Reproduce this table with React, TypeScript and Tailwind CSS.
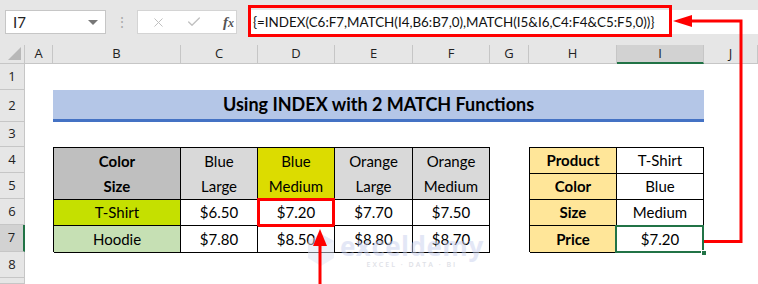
import { Check, X } from "lucide-react";

const COLS = ["A", "B", "C", "D", "E", "F", "G", "H", "I", "J"];
const ROWS = [1, 2, 3, 4, 5, 6, 7, 8, 9];

const CELL = "flex items-center justify-center border-r border-b border-black";

type Row = { product: string; bg: string; prices: string[] };

const ROWS_DATA: Row[] = [
  { product: "T-Shirt", bg: "bg-[#c5e000]", prices: ["$6.50", "$7.20", "$7.70", "$7.50"] },
  { product: "Hoodie", bg: "bg-[#c6e0b4]", prices: ["$7.80", "$8.50", "$8.80", "$8.70"] },
];

const HEADS = [
  { top: "Blue", bottom: "Large", bg: "bg-[#d9d9d9]" },
  { top: "Blue", bottom: "Medium", bg: "bg-[#dcdc00]" },
  { top: "Orange", bottom: "Large", bg: "bg-[#d9d9d9]" },
  { top: "Orange", bottom: "Medium", bg: "bg-[#d9d9d9]" },
];

const LOOKUP = [
  { label: "Product", value: "T-Shirt" },
  { label: "Color", value: "Blue" },
  { label: "Size", value: "Medium" },
  { label: "Price", value: "$7.20" },
];

function FormulaBar() {
  return (
    <div className="flex h-[45px] items-start pt-[10px] pl-[5px]">
      <div className="flex h-[24px] w-[101px] items-center justify-between border border-[#c6c6c6] bg-white pl-[7px] pr-[7px] text-[15px] text-[#222]">
        <span>I7</span>
        <span className="h-0 w-0 border-x-[5px] border-t-[5px] border-x-transparent border-t-[#777]" />
      </div>
      <div className="flex h-[24px] w-[31px] items-center justify-center text-[14px] leading-none text-[#aaa]">
        ⋮
      </div>
      <div className="flex h-[24px] w-[100px] items-center border border-[#d4d4d4] bg-white">
        <X size={15} strokeWidth={1.6} className="ml-[13px] text-[#c0c0c0]" />
        <Check size={16} strokeWidth={2} className="ml-[20px] text-[#c0c0c0]" />
        <span className="ml-[21px] font-['Liberation_Serif',serif] text-[15px] font-bold italic text-[#555]">
          f<span className="text-[12px]">x</span>
        </span>
      </div>
      <div className="relative ml-[11px] flex h-[24px] flex-1 items-center bg-white pl-[5px] text-[13.4px] text-[#111]">
        {"{=INDEX(C6:F7,MATCH(I4,B6:B7,0),MATCH(I5&I6,C4:F4&C5:F5,0))}"}
        <div className="absolute left-0 top-[-5px] h-[32px] w-[424px] border-[3px] border-[#ff0000]" />
      </div>
    </div>
  );
}

function Watermark() {
  return (
    <div className="pointer-events-none absolute left-[307px] top-[233px] flex items-start gap-[5px] opacity-50">
      <svg width="28" height="34" viewBox="0 0 28 34">
        <path d="M14 1 L27 8 L27 25 L14 33 L1 25 L1 8 Z" fill="#dfe4f4" />
        <path d="M14 1 L27 8 L14 16 L1 8 Z" fill="#cfd7f0" />
      </svg>
      <div className="flex flex-col items-center pt-[2px]">
        <span className="font-['Open_Sans',sans-serif] text-[26px] font-bold leading-[22px] tracking-[0.5px] text-[#c9d1ee]">
          exceldemy
        </span>
        <span className="mt-[3px] font-['Open_Sans',sans-serif] text-[7px] font-semibold tracking-[2px] text-[#bfc3cf]">
          EXCEL · DATA · BI
        </span>
      </div>
    </div>
  );
}

function Arrows() {
  return (
    <svg className="pointer-events-none absolute left-0 top-0" width="758" height="284">
      <path d="M320 284 V244" stroke="#ff0000" strokeWidth="3" fill="none" />
      <path d="M313 246 L320 229 L327 246 Z" fill="#ff0000" />
      <path d="M704 241.5 H741 V21 H690" stroke="#ff0000" strokeWidth="3" fill="none" />
      <path d="M692 15 L673 21 L692 27 Z" fill="#ff0000" />
    </svg>
  );
}

export default function App() {
  return (
    <div className="relative h-[284px] w-[758px] overflow-hidden bg-[#e6e6e6] font-['Lato','Liberation_Sans',sans-serif]">
      <FormulaBar />
      <div className="grid h-[239px] grid-cols-[25px_28px_128px_77px_77px_78px_77px_39px_88px_87px_1fr] grid-rows-[19px_26px_32px_25px_26px_26px_26px_27px_26px_1fr] bg-white">
        {/* corner + column headers */}
        <div className="relative border-r border-b border-[#c6c6c6] bg-[#e6e6e6]">
          <div className="absolute bottom-[3px] right-[3px] h-0 w-0 border-l-[13px] border-b-[13px] border-l-transparent border-b-[#b8b8b8]" />
        </div>
        {COLS.map((c) => (
          <div
            key={c}
            className={`flex items-center justify-center border-r border-[#c6c6c6] font-['Open_Sans',sans-serif] text-[13px] text-[#222] ${
              c === "I" ? "border-b-2 border-b-[#217346] bg-[#d2d2d2]" : "border-b border-b-[#c6c6c6] bg-[#e6e6e6]"
            }`}
          >
            {c}
          </div>
        ))}

        {/* row headers; row 9 is cut off at the bottom edge */}
        {ROWS.map((r) => (
          <div
            key={r}
            style={{ gridRow: r + 1, gridColumn: 1 }}
            className={`flex items-center justify-center border-b border-[#c6c6c6] font-['Open_Sans',sans-serif] text-[13px] text-[#222] ${
              r === 7 ? "border-r-2 border-r-[#217346] bg-[#d2d2d2]" : "border-r border-r-[#c6c6c6] bg-[#e6e6e6]"
            }`}
          >
            {r < 9 ? r : null}
          </div>
        ))}

        {/* title band */}
        <div className="col-start-3 col-end-11 row-start-3 flex items-center justify-center border-b-[3px] border-[#4472c4] bg-[#b4c6e7] text-[18px] font-bold text-black">
          Using INDEX with 2 MATCH Functions
        </div>

        {/* price grid */}
        <div className="col-start-3 col-end-8 row-start-5 row-end-9 grid grid-cols-[127px_77px_77px_78px_77px] grid-rows-[52px_26px_27px] border-l border-t border-black text-[15px] text-black">
          <div className={`${CELL} flex-col bg-[#bfbfbf] font-bold`}>
            <span className="flex h-[26px] items-center">Color</span>
            <span className="flex h-[26px] items-center">Size</span>
          </div>
          {HEADS.map((h, i) => (
            <div key={i} className={`${CELL} flex-col ${h.bg}`}>
              <span className="flex h-[26px] items-center">{h.top}</span>
              <span className="flex h-[26px] items-center">{h.bottom}</span>
            </div>
          ))}
          {ROWS_DATA.map((row) => (
            <div key={row.product} className="contents">
              <div className={`${CELL} ${row.bg}`}>{row.product}</div>
              {row.prices.map((p, i) => (
                <div key={i} className={`${CELL} relative`}>
                  {p}
                  {row.product === "T-Shirt" && i === 1 && (
                    <div className="absolute -left-[1px] -top-[2px] h-[29px] w-[78px] border-[3px] border-[#ff0000]" />
                  )}
                </div>
              ))}
            </div>
          ))}
        </div>

        {/* lookup inputs */}
        <div className="col-start-9 col-end-11 row-start-5 row-end-9 grid grid-cols-[87px_87px] grid-rows-[26px_26px_26px_27px] border-l border-t border-black text-[15px] text-black">
          {LOOKUP.map((item) => (
            <div key={item.label} className="contents">
              <div className={`${CELL} bg-[#ffe699] font-bold`}>{item.label}</div>
              <div className={`${CELL} relative`}>
                {item.value}
                {item.label === "Price" && (
                  <>
                    <div className="absolute -left-[2px] -top-[1px] h-[28px] w-[89px] border-2 border-[#217346]" />
                    <div className="absolute -bottom-[4px] -right-[4px] h-[6px] w-[6px] border border-white bg-[#217346]" />
                  </>
                )}
              </div>
            </div>
          ))}
        </div>
      </div>
      <Watermark />
      <Arrows />
    </div>
  );
}
